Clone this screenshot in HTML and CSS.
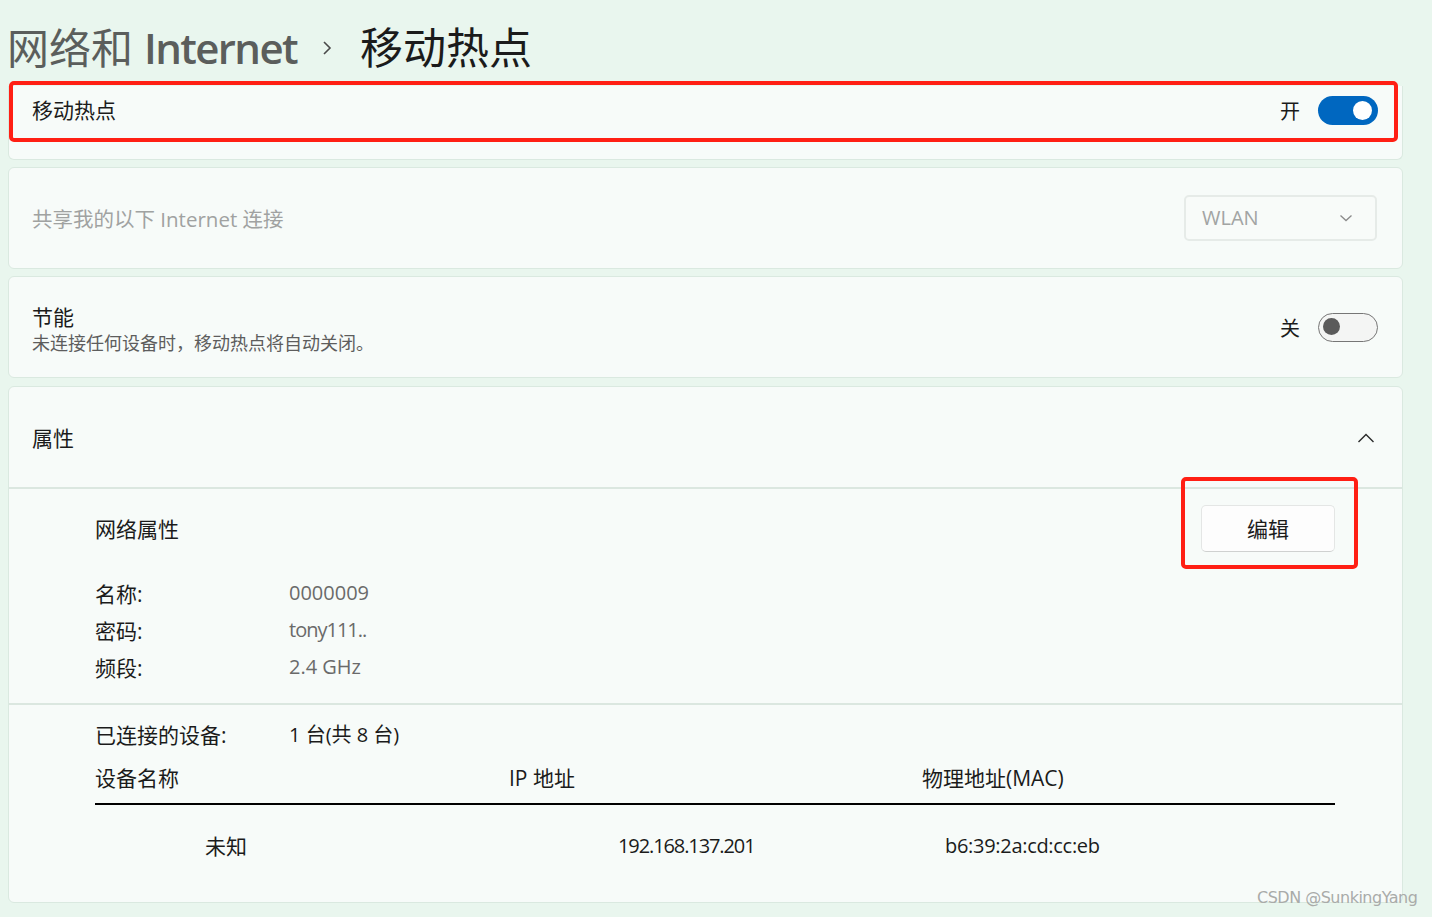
FILE: index.html
```html
<!DOCTYPE html>
<html lang="zh-CN">
<head>
<meta charset="utf-8">
<title>移动热点</title>
<link rel="stylesheet" href="styles.css">
</head>
<body>
<div class="page">
  <header class="header">
    <h1 class="title">
      <span class="crumb">网络和 <span class="latin">Internet</span></span>
      <svg class="crumb-sep" width="14" height="18" viewBox="0 0 14 18"><path d="M4 3 L10 9 L4 15" fill="none" stroke="#4a4a4a" stroke-width="1.6"/></svg>
      <span class="current">移动热点</span>
    </h1>
  </header>

  <main class="cards">
    <section class="card card-top">
      <div class="row">
        <span class="label">移动热点</span>
        <div class="switch-wrap">
          <span class="state">开</span>
          <span class="toggle on"><span class="knob"></span></span>
        </div>
      </div>
      <div class="highlight hl-top"></div>
    </section>

    <section class="card card-row">
      <span class="label disabled">共享我的以下 Internet 连接</span>
      <div class="select">
        <span>WLAN</span>
        <svg width="14" height="8" viewBox="0 0 14 8"><path d="M1.5 1.5 L7 6.5 L12.5 1.5" fill="none" stroke="#8a8a8a" stroke-width="1.3"/></svg>
      </div>
    </section>

    <section class="card card-row">
      <div class="texts">
        <span class="label">节能</span>
        <span class="desc">未连接任何设备时，移动热点将自动关闭。</span>
      </div>
      <div class="switch-wrap">
        <span class="state">关</span>
        <span class="toggle off"><span class="knob"></span></span>
      </div>
    </section>

    <section class="card card-props">
      <div class="props-head">
        <span class="label">属性</span>
        <svg class="chev-up" width="18" height="10" viewBox="0 0 18 10"><path d="M1.5 9 L9 1.5 L16.5 9" fill="none" stroke="#2a2a2a" stroke-width="1.4"/></svg>
      </div>
      <div class="props-net">
        <div class="net-head">
          <span class="label">网络属性</span>
          <button class="btn">编辑</button>
        </div>
        <dl class="kv">
          <dt>名称:</dt><dd>0000009</dd>
          <dt>密码:</dt><dd class="narrow">tony111..</dd>
          <dt>频段:</dt><dd>2.4 GHz</dd>
        </dl>
      </div>
      <div class="props-dev">
        <div class="kv-dev">
          <span class="k">已连接的设备:</span><span class="v">1 台(共 8 台)</span>
        </div>
        <div class="table">
          <div class="th">设备名称</div>
          <div class="th">IP 地址</div>
          <div class="th">物理地址(MAC)</div>
          <div class="td c1">未知</div>
          <div class="td c2">192.168.137.201</div>
          <div class="td c3">b6:39:2a:cd:cc:eb</div>
        </div>
      </div>
      <div class="highlight hl-edit"></div>
    </section>
  </main>
  <div class="watermark">CSDN @SunkingYang</div>
</div>
</body>
</html>
```

FILE: styles.css
```css
* { box-sizing: border-box; }
html, body {
  margin: 0;
  height: 917px;
  overflow: hidden;
}
body {
  background: #e9f6ee;
  font-family: "Open Sans", "Noto Sans CJK SC", sans-serif;
  color: #1b1b1b;
}
.page {
  position: relative;
  height: 917px;
}
.header {
  height: 86px;
  padding: 23px 0 0 7px;
}
.title {
  margin: 0;
  font-size: 42px;
  line-height: 50px;
  font-weight: 400;
  display: flex;
  align-items: center;
  white-space: nowrap;
}
.crumb { color: #5b5e5c; }
.crumb .latin { font-weight: 600; letter-spacing: -1.6px; }
.crumb-sep { margin: 0 26px 0 23px; }
.current { color: #1b1b1b; font-size: 43px; }

.cards {
  display: flex;
  flex-direction: column;
  gap: 7px;
  padding: 0 29px 0 8px;
}
.card {
  position: relative;
  background: #f7fbf9;
  border: 1px solid #dae9e0;
  border-radius: 6px;
}
.card-top {
  height: 74px;
  padding: 9px 25px 0 23px;
  border-top: none;
  border-top-left-radius: 0;
  border-top-right-radius: 0;
}
.row {
  display: flex;
  align-items: center;
  justify-content: space-between;
  height: 30px;
}
.card-row {
  height: 102px;
  padding: 2px 25px 0 23px;
  display: flex;
  align-items: center;
  justify-content: space-between;
}
.label {
  font-size: 21px;
  line-height: 28px;
  color: #1b1b1b;
}
.label.disabled { color: #a0a2a1; font-size: 20.5px; }
.texts {
  display: flex;
  flex-direction: column;
  padding-top: 4px;
}
.texts .label { line-height: 26px; }
.desc {
  font-size: 18px;
  line-height: 26px;
  color: #5d5d5d;
}
.switch-wrap {
  display: flex;
  align-items: center;
  gap: 18px;
}
.state {
  font-size: 20px;
  color: #1b1b1b;
}
.toggle {
  position: relative;
  display: block;
  width: 60px;
  height: 29px;
  border-radius: 15px;
  margin-right: -1px;
}
.card-row .switch-wrap { margin-top: -2px; }
.toggle.on { background: #0067c0; }
.toggle.on .knob {
  position: absolute;
  right: 6px;
  top: 5px;
  width: 19px;
  height: 19px;
  border-radius: 50%;
  background: #ffffff;
}
.toggle.off {
  background: #f4f5f4;
  border: 1.5px solid #767676;
}
.toggle.off .knob {
  position: absolute;
  left: 4px;
  top: 4.5px;
  width: 17px;
  height: 17px;
  border-radius: 50%;
  background: #5b5b5b;
}
.select {
  width: 193px;
  height: 46px;
  margin-top: -3px;
  border: 2px solid #e6ebe8;
  border-radius: 5px;
  background: #f8fbf9;
  display: flex;
  align-items: center;
  justify-content: space-between;
  padding: 0 22px 0 16px;
  font-size: 20px;
  color: #a2a4a3;
}
.card-props {
  margin-top: 1px;
  height: 517px;
}
.props-head {
  height: 102px;
  padding: 2px 27px 0 23px;
  display: flex;
  align-items: center;
  justify-content: space-between;
  border-bottom: 2px solid #dbe7e0;
}
.chev-up { margin-top: 0; }
.props-net {
  height: 216px;
  padding: 16px 67px 0 86px;
  border-bottom: 2px solid #dbe7e0;
}
.net-head {
  display: flex;
  align-items: center;
  justify-content: space-between;
  height: 46px;
}
.net-head .label { padding-top: 2px; }
.btn {
  width: 134px;
  height: 47px;
  background: #fdfdfd;
  border: 1px solid #e4e6e5;
  border-bottom-color: #cfd1d0;
  border-radius: 5px;
  font-family: inherit;
  font-size: 21px;
  color: #1b1b1b;
  padding: 0;
}
.kv {
  margin: 23px 0 0 0;
  display: grid;
  grid-template-columns: 194px 1fr;
  grid-auto-rows: 37px;
  align-items: center;
  font-size: 20px;
}
.kv dt { color: #1b1b1b; font-size: 21px; }
.kv dd { margin: 0; color: #6a6a6a; }
.kv dd.narrow { letter-spacing: -1px; }
.props-dev {
  padding: 10px 67px 0 86px;
}
.kv-dev {
  display: grid;
  grid-template-columns: 194px 1fr;
  height: 37px;
  align-items: center;
  font-size: 21px;
}
.kv-dev .v { font-size: 20px; }
.table {
  display: grid;
  grid-template-columns: 414px 413px 413px;
  font-size: 20px;
}
.th {
  height: 53px;
  padding-top: 12px;
  line-height: 28px;
  border-bottom: 2px solid #000;
  color: #1b1b1b;
  font-size: 21px;
}
.td {
  height: 80px;
  display: flex;
  align-items: center;
  color: #1b1b1b;
}
.c1 { padding-left: 110px; font-size: 21px; }
.c2 { padding-left: 109px; letter-spacing: -1.1px; }
.c3 { padding-left: 23px; letter-spacing: -0.3px; }

.highlight {
  position: absolute;
  border: 4px solid #ff1f14;
  border-radius: 5px;
  pointer-events: none;
}
.hl-top {
  left: 0;
  top: -5px;
  width: 1389px;
  height: 61px;
}
.hl-edit {
  left: 1172px;
  top: 90px;
  width: 177px;
  height: 92px;
}
.watermark {
  position: absolute;
  left: 1257px;
  top: 888px;
  font-family: "DejaVu Sans", sans-serif;
  font-size: 16px;
  color: #a9aba9;
  letter-spacing: -0.5px;
}
```
